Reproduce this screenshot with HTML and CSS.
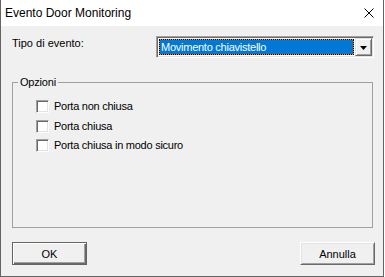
FILE: index.html
```html
<!DOCTYPE html>
<html lang="it">
<head>
<meta charset="utf-8">
<title>Evento Door Monitoring</title>
<link rel="stylesheet" href="styles.css">
</head>
<body>
<div class="window">
  <div class="titlebar">
    <span class="title">Evento Door Monitoring</span>
    <span class="close"><svg width="10" height="10" viewBox="0 0 10 10"><path d="M0.5 0.5 L9.5 9.5 M9.5 0.5 L0.5 9.5" stroke="#000" stroke-width="1" fill="none"/></svg></span>
  </div>
  <div class="content">
    <div class="row">
      <span class="label">Tipo di evento:</span>
      <div class="combo">
        <div class="combo-value"><div class="focus"><span class="sel">Movimento chiavistello</span></div></div>
        <div class="combo-btn"><svg width="7" height="4" viewBox="0 0 7 4"><path d="M0 0 H7 L3.5 4 Z" fill="#000"/></svg></div>
      </div>
    </div>
    <fieldset class="group">
      <legend class="legend">Opzioni</legend>
      <label class="check"><span class="box"></span>Porta non chiusa</label>
      <label class="check"><span class="box"></span>Porta chiusa</label>
      <label class="check"><span class="box"></span>Porta chiusa in modo sicuro</label>
    </fieldset>
    <div class="buttons">
      <button class="btn btn-default">OK</button>
      <button class="btn">Annulla</button>
    </div>
  </div>
</div>
</body>
</html>
```
FILE: styles.css
```css
html, body {
  margin: 0;
  padding: 0;
  background: #ffffff;
}
body {
  font-family: "Liberation Sans", Arial, sans-serif;
  font-size: 11px;
  color: #000;
}
.window {
  width: 384px;
  height: 277px;
  box-sizing: border-box;
  border: 1px solid #646464;
  border-top: none;
  background: #f0f0f0;
  display: flex;
  flex-direction: column;
}
.titlebar {
  height: 26px;
  flex: none;
  background: #ffffff;
  display: flex;
  align-items: center;
  padding-left: 4px;
  padding-right: 9px;
}
.title {
  font-size: 12px;
  line-height: 26px;
  flex: 1;
}
.close {
  width: 10px;
  height: 10px;
  display: flex;
}
.content {
  flex: 1;
  padding: 10px 0 0 11px;
  display: flex;
  flex-direction: column;
}
.row {
  display: flex;
  align-items: flex-start;
}
.label {
  width: 144px;
  line-height: 13px;
  margin-top: 1px;
}
.combo {
  width: 218px;
  height: 22px;
  box-sizing: border-box;
  border: 1px solid;
  border-color: #a0a0a0 #ffffff #ffffff #a0a0a0;
  box-shadow: inset 1px 1px 0 #696969, inset -1px -1px 0 #e3e3e3;
  padding: 1px;
  background: #ffffff;
  display: flex;
}
.combo-value {
  flex: 1;
  padding: 1px;
  display: flex;
}
.focus {
  flex: 1;
  background: #ff8728;
  display: flex;
}
.sel {
  flex: 1;
  box-sizing: border-box;
  border: 1px dotted #000;
  background: #0078d7;
  background-clip: padding-box;
  color: #ffffff;
  line-height: 14px;
  padding-left: 1px;
  white-space: nowrap;
  letter-spacing: -0.25px;
}
.combo-btn {
  width: 17px;
  height: 18px;
  box-sizing: border-box;
  border: 1px solid;
  border-color: #e3e3e3 #696969 #696969 #e3e3e3;
  box-shadow: inset 1px 1px 0 #ffffff, inset -1px -1px 0 #a0a0a0;
  background: #f0f0f0;
  display: flex;
  align-items: center;
  justify-content: center;
  padding-top: 1px;
}
.group {
  margin: 18px 0 0 0;
  width: 361px;
  height: 152px;
  box-sizing: border-box;
  border: 1px solid #a0a0a0;
  padding: 8px 0 0 0;
  display: flex;
  flex-direction: column;
}
.legend {
  margin-left: 5px;
  padding: 0 2px;
  line-height: 13px;
  letter-spacing: -0.2px;
}
.check {
  height: 19.5px;
  display: flex;
  align-items: center;
  margin-left: 23px;
  line-height: 13px;
  letter-spacing: -0.25px;
}
.box {
  width: 13px;
  height: 13px;
  box-sizing: border-box;
  border: 1px solid;
  border-color: #a0a0a0 #ffffff #ffffff #a0a0a0;
  box-shadow: inset 1px 1px 0 #696969, inset -1px -1px 0 #e3e3e3;
  background: #ffffff;
  margin-right: 5px;
  flex: none;
}
.buttons {
  margin-top: 14px;
  width: 363px;
  display: flex;
  justify-content: space-between;
}
.btn {
  width: 75px;
  height: 23px;
  box-sizing: border-box;
  margin: 0;
  padding: 0;
  font-family: "Liberation Sans", Arial, sans-serif;
  font-size: 11px;
  color: #000;
  background: #f0f0f0;
  border: 1px solid;
  border-color: #ffffff #696969 #696969 #ffffff;
  box-shadow: inset 1px 1px 0 #e3e3e3, inset -1px -1px 0 #a0a0a0;
}
.btn-default {
  border: 1px solid #646464;
  box-shadow: inset 1px 1px 0 #ffffff, inset -1px -1px 0 #696969, inset -2px -2px 0 #a0a0a0;
}
```
